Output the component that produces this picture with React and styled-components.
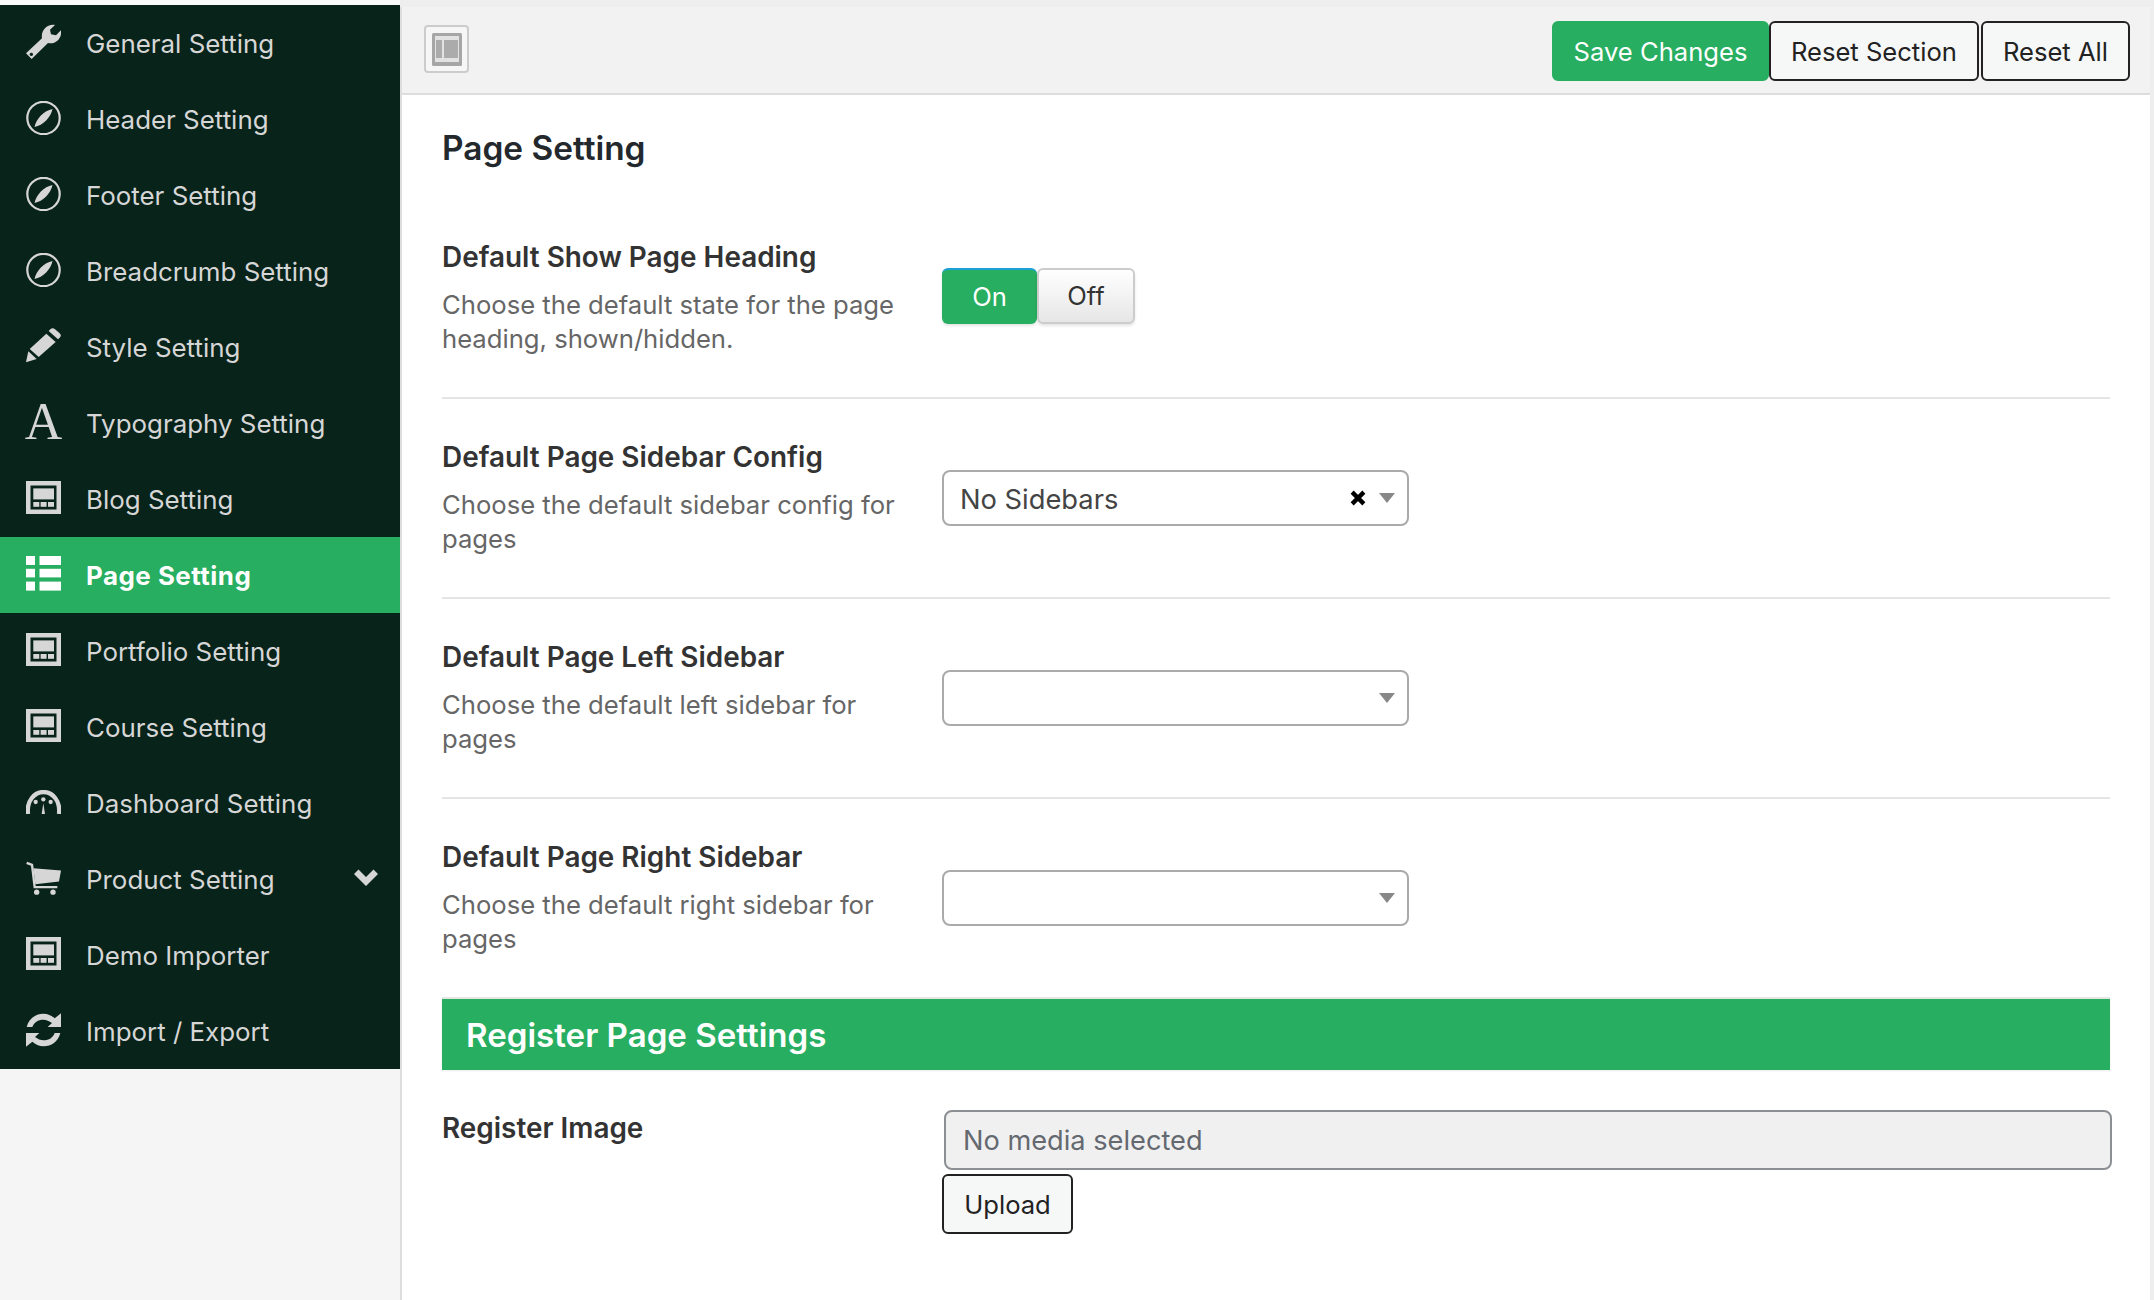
import styled, { createGlobalStyle } from 'styled-components';

const GREEN = '#27ae60';
const DARK = '#08231a';

const GlobalStyle = createGlobalStyle`
    html, body {
        margin: 0;
        padding: 0;
        background: #fafafa;
    }
    * {
        box-sizing: border-box;
    }
    body {
        font-family: Inter, "Liberation Sans", sans-serif;
    }
`;

const Shell = styled.div`
    display: flex;
    width: 2154px;
    height: 1300px;
    overflow: hidden;
    background: #eeeeee;
`;

const Sidebar = styled.aside`
    width: 400px;
    flex-shrink: 0;
    padding-top: 5px;
    background: linear-gradient(#fafafa 5px, #f5f5f5 5px);
`;

const Menu = styled.ul`
    margin: 0;
    padding: 0;
    list-style: none;
    background: ${DARK};
`;

const MenuItem = styled.li`
    display: flex;
    align-items: center;
    height: 76px;
    padding-left: 26px;
    background: ${p => (p.$active ? GREEN : 'transparent')};
    color: ${p => (p.$active ? '#ffffff' : '#d6d6d6')};
    font-size: 25.9px;
    font-weight: ${p => (p.$active ? 700 : 400)};
    letter-spacing: ${p => (p.$active ? '0.5px' : '0')};
`;

const IconSlot = styled.span`
    display: flex;
    align-items: center;
    justify-content: center;
    width: 35px;
    height: 36px;
    margin: -3px 25px 0 0;
    flex-shrink: 0;
`;

const SerifIcon = styled.span`
    font-family: "Liberation Serif", serif;
    font-size: 52px;
    line-height: 36px;
    font-weight: 400;
`;

const Chevron = styled.svg`
    width: 24px;
    height: 17px;
    margin: -3px 22px 0 auto;
`;

const Main = styled.main`
    display: flex;
    flex-direction: column;
    width: 1750px;
    margin-top: 7px;
    background: #ffffff;
    border-left: 2px solid #dddddd;
`;

const TopBar = styled.header`
    display: flex;
    align-items: center;
    justify-content: space-between;
    height: 88px;
    padding: 14px 20px 12px 22px;
    background: #f2f2f2;
    border-bottom: 2px solid #dddddd;
`;

const LayoutToggle = styled.button`
    display: flex;
    align-items: center;
    justify-content: center;
    width: 45px;
    height: 48px;
    margin-bottom: 4px;
    padding: 0;
    background: #f6f6f6;
    border: 2px solid #cccccc;
    border-radius: 4px;
`;

const TopActions = styled.div`
    display: flex;
`;

const ActionButton = styled.button`
    height: 60px;
    padding: 0 ${p => p.$pad || 20}px;
    margin-left: ${p => p.$gap || 0}px;
    font-family: inherit;
    font-size: 25.6px;
    color: ${p => (p.$primary ? '#ffffff' : '#222222')};
    background: ${p => (p.$primary ? GREEN : '#f6f7f7')};
    border: 2px solid ${p => (p.$primary ? GREEN : '#222222')};
    border-radius: 6px;
`;

const Content = styled.section`
    padding: 0 40px;
`;

const PageTitle = styled.h1`
    margin: 33px 0 31px;
    font-size: 33.4px;
    line-height: 40px;
    font-weight: 600;
    color: #23282d;
`;

const Row = styled.div`
    display: flex;
    padding: 41px 0;
    border-bottom: ${p => (p.$last ? 'none' : '2px solid #e5e5e5')};
`;

const LabelCol = styled.div`
    width: 500px;
    flex-shrink: 0;
`;

const Label = styled.div`
    font-size: 27.9px;
    line-height: 34px;
    font-weight: 600;
    color: #333333;
`;

const Description = styled.div`
    max-width: 470px;
    margin-top: 14px;
    font-size: 25.65px;
    line-height: 34px;
    color: #666666;
`;

const Switch = styled.div`
    display: flex;
    margin-top: 28px;
    height: 56px;
`;

const SwitchPart = styled.div`
    display: flex;
    align-items: center;
    justify-content: center;
    width: ${p => (p.$on ? 95 : 98)}px;
    padding-bottom: 2px;
    font-size: 25.6px;
    border-radius: 6px;
    color: ${p => (p.$on ? '#ffffff' : '#333333')};
    background: ${p => (p.$on ? GREEN : 'linear-gradient(#ffffff, #e6e6e6)')};
    border: ${p => (p.$on ? 'none' : '2px solid #cccccc')};
    border-top: ${p => (p.$on ? '2px solid #1ba1d6' : '2px solid #cccccc')};
    box-shadow: 0 2px 3px rgba(0, 0, 0, 0.1);
`;

const Select = styled.div`
    display: flex;
    align-items: center;
    width: 467px;
    height: 56px;
    margin-top: 30px;
    padding: 0 12px 0 16px;
    background: #ffffff;
    border: 2px solid #aaaaaa;
    border-radius: 8px;
`;

const SelectValue = styled.span`
    flex: 1;
    padding-top: 2px;
    font-size: 27.3px;
    color: #444444;
`;

const ClearMark = styled.svg`
    width: 16px;
    height: 16px;
    margin-right: 13px;
`;

const Caret = styled.span`
    width: 0;
    height: 0;
    margin-left: auto;
    border-left: 8px solid transparent;
    border-right: 8px solid transparent;
    border-top: 10px solid #888888;
`;

const SectionHead = styled.h2`
    margin: 0;
    height: 73px;
    padding-left: 24px;
    display: flex;
    align-items: center;
    font-size: 33.1px;
    font-weight: 600;
    color: #ffffff;
    background: ${GREEN};
    border-top: 2px solid #e5e5e5;
    box-shadow: 0 1px 2px rgba(0, 0, 0, 0.08);
`;

const MediaRow = styled.div`
    display: flex;
    padding-top: 40px;
`;

const MediaLabel = styled(Label)`
    padding-top: 1px;
`;

const MediaControls = styled.div`
    display: flex;
    flex-direction: column;
    align-items: flex-start;
`;

const MediaField = styled.div`
    display: flex;
    align-items: center;
    width: 1168px;
    height: 60px;
    margin-left: 2px;
    padding-left: 17px;
    font-size: 27.2px;
    color: #646970;
    background: #f0f0f0;
    border: 2px solid #8c8f94;
    border-radius: 8px;
`;

const UploadButton = styled(ActionButton)`
    width: 131px;
    margin-top: 4px;
    padding: 0;
`;

const Wrench = () => (
    <svg width="35" height="35" viewBox="18 27 105 105" fill="currentColor">
        <path fillRule="evenodd" d="M18 115 L66 70 C62 48 80 26 105 30 L90 44 L93 58 L108 61 L123 46 C127 70 106 90 84 84 L35 132 Z M34 113 a5 5 0 1 0 0.1 0 Z" />
    </svg>
);

const Compass = () => (
    <svg width="35" height="34" viewBox="0 0 35 34" fill="currentColor">
        <circle cx="17.5" cy="17" r="16.2" fill="none" stroke="currentColor" strokeWidth="2.2" />
        <path d="M26.5 8 C25 16 17 24.5 8.5 26 C10 18 18 9.5 26.5 8 Z" />
    </svg>
);

const Pencil = () => (
    <svg width="35" height="35" viewBox="18 27 105 105" fill="currentColor">
        <path d="M91 31 Q98 25 105 31 L119 43 Q126 50 119 56 L114 61 L86 36 Z" />
        <path d="M79 44 L107 69 L56 114 L29 90 Z" />
        <path d="M25 97 L50 120 L18 130 Z" />
    </svg>
);

const Website = () => (
    <svg width="35" height="33" viewBox="0 0 35 33">
        <rect width="35" height="33" fill="currentColor" />
        <rect x="4.5" y="4.5" width="26" height="24" fill={DARK} />
        <rect x="7.3" y="7.4" width="20.7" height="11" fill="currentColor" />
        <rect x="7.3" y="21" width="6" height="4.8" fill="currentColor" />
        <rect x="14.6" y="21" width="6" height="4.8" fill="currentColor" />
        <rect x="22" y="21" width="6" height="4.8" fill="currentColor" />
    </svg>
);

const ThList = () => (
    <svg width="35" height="35" viewBox="0 0 35 35" fill="currentColor">
        <rect x="0" y="0" width="9" height="9" />
        <rect x="13.5" y="0" width="21.5" height="9" />
        <rect x="0" y="12.8" width="9" height="8.6" />
        <rect x="13.5" y="12.8" width="21.5" height="8.6" />
        <rect x="0" y="25.6" width="9" height="9" />
        <rect x="13.5" y="25.6" width="21.5" height="9" />
    </svg>
);

const Dashboard = () => (
    <svg width="35" height="24" viewBox="18 30 105 72" fill="currentColor">
        <path d="M24 102 C19 62 44 36 70.5 36 C97 36 122 62 117 102" fill="none" stroke="currentColor" strokeWidth="13" />
        <circle cx="47" cy="66" r="6.5" />
        <circle cx="70" cy="58" r="6.5" />
        <circle cx="92" cy="66" r="6.5" />
        <path d="M65 102 L70 70 L75 102 Z" />
    </svg>
);

const Cart = () => (
    <svg width="35" height="34" viewBox="18 245 105 101" fill="currentColor">
        <path d="M20 250 L36 256 L44 323 L112 323" fill="none" stroke="currentColor" strokeWidth="7" />
        <path d="M40 266 L123 273 L117 306 L46 314 Z" />
        <circle cx="50" cy="338" r="8" />
        <circle cx="99" cy="338" r="8" />
    </svg>
);

const syncArc = 'M20 68 C26 42 48 28 70 28 C84 28 95 34 104 42 L123 27 L123 68 L83 68 L96 56 C88 50 79 46 70 46 C54 46 42 54 37 68 Z';

const Refresh = () => (
    <svg width="35" height="34" viewBox="18 27 105 100" fill="currentColor">
        <path d={syncArc} />
        <path transform="rotate(180 70.5 77)" d={syncArc} />
    </svg>
);

const menu = [
    { label: 'General Setting', icon: <Wrench /> },
    { label: 'Header Setting', icon: <Compass /> },
    { label: 'Footer Setting', icon: <Compass /> },
    { label: 'Breadcrumb Setting', icon: <Compass /> },
    { label: 'Style Setting', icon: <Pencil /> },
    { label: 'Typography Setting', icon: <SerifIcon>A</SerifIcon> },
    { label: 'Blog Setting', icon: <Website /> },
    { label: 'Page Setting', icon: <ThList />, active: true },
    { label: 'Portfolio Setting', icon: <Website /> },
    { label: 'Course Setting', icon: <Website /> },
    { label: 'Dashboard Setting', icon: <Dashboard /> },
    { label: 'Product Setting', icon: <Cart />, more: true },
    { label: 'Demo Importer', icon: <Website /> },
    { label: 'Import / Export', icon: <Refresh /> },
];

const settings = [
    { label: 'Default Page Sidebar Config', text: 'Choose the default sidebar config for pages', value: 'No Sidebars' },
    { label: 'Default Page Left Sidebar', text: 'Choose the default left sidebar for pages' },
    { label: 'Default Page Right Sidebar', text: 'Choose the default right sidebar for pages', last: true },
];

const App = () => (
    <>
        <GlobalStyle />
        <Shell>
            <Sidebar>
                <Menu>
                    {menu.map(m => (
                        <MenuItem key={m.label} $active={m.active}>
                            <IconSlot>{m.icon}</IconSlot>
                            {m.label}
                            {m.more && (
                                <Chevron viewBox="0 0 24 17" fill="currentColor">
                                    <path d="M0 5 L4.5 0.5 L12 8 L19.5 0.5 L24 5 L12 17 Z" />
                                </Chevron>
                            )}
                        </MenuItem>
                    ))}
                </Menu>
            </Sidebar>
            <Main>
                <TopBar>
                    <LayoutToggle>
                        <svg width="30" height="33" viewBox="0 0 30 33">
                            <rect width="30" height="33" rx="1.5" fill="#a6a6a6" />
                            <rect x="3" y="3" width="24" height="26" fill="#e2e2e2" />
                            <rect x="4" y="7" width="6" height="18" fill="#ababab" />
                            <rect x="12" y="7" width="14" height="18" fill="#ababab" />
                        </svg>
                    </LayoutToggle>
                    <TopActions>
                        <ActionButton $primary $pad={19.5}>Save Changes</ActionButton>
                        <ActionButton>Reset Section</ActionButton>
                        <ActionButton $gap={2}>Reset All</ActionButton>
                    </TopActions>
                </TopBar>
                <Content>
                    <PageTitle>Page Setting</PageTitle>
                    <Row>
                        <LabelCol>
                            <Label>Default Show Page Heading</Label>
                            <Description>Choose the default state for the page heading, shown/hidden.</Description>
                        </LabelCol>
                        <Switch>
                            <SwitchPart $on>On</SwitchPart>
                            <SwitchPart>Off</SwitchPart>
                        </Switch>
                    </Row>
                    {settings.map(s => (
                        <Row key={s.label} $last={s.last}>
                            <LabelCol>
                                <Label>{s.label}</Label>
                                <Description>{s.text}</Description>
                            </LabelCol>
                            <Select>
                                {s.value && <SelectValue>{s.value}</SelectValue>}
                                {s.value && (
                                    <ClearMark viewBox="0 0 15 15">
                                        <path d="M2 2 L13 13 M13 2 L2 13" stroke="#000000" strokeWidth="4" />
                                    </ClearMark>
                                )}
                                <Caret />
                            </Select>
                        </Row>
                    ))}
                    <SectionHead>Register Page Settings</SectionHead>
                    <MediaRow>
                        <LabelCol>
                            <MediaLabel>Register Image</MediaLabel>
                        </LabelCol>
                        <MediaControls>
                            <MediaField>No media selected</MediaField>
                            <UploadButton>Upload</UploadButton>
                        </MediaControls>
                    </MediaRow>
                </Content>
            </Main>
        </Shell>
    </>
);

export default App;
